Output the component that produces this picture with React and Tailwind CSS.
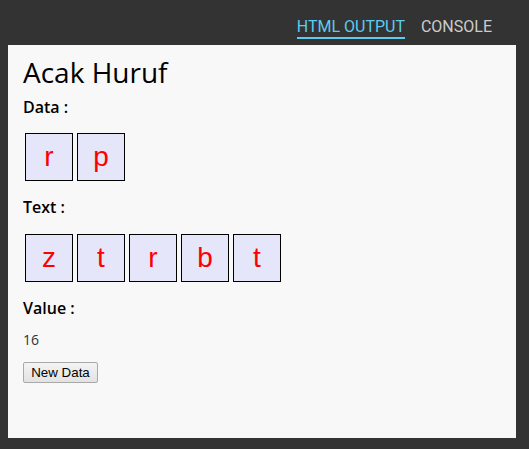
export default function App() {
  const data = ["r", "p"];
  const text = ["z", "t", "r", "b", "t"];
  const Box = ({ c }) => (
    <div className="w-[48px] h-[48px] border border-black bg-[#e6e6fa] text-[#ff0000] text-center text-[28px] leading-[46px] [font-family:'Liberation_Sans',Arial,sans-serif]">
      {c}
    </div>
  );
  return (
    <div className="w-[529px] h-[449px] bg-[#333333] flex flex-col overflow-hidden">
      <div className="h-[45px] flex justify-end items-start pr-[37px] pt-[17px] gap-[16px] [font-family:Roboto,sans-serif] text-[16px] leading-[19px]">
        <div className="text-[#5ccbef] border-b-2 border-[#5ccbef] pb-[1px]">HTML OUTPUT</div>
        <div className="text-[#cccccc]">CONSOLE</div>
      </div>
      <div className="ml-[8px] w-[508px] h-[393px] bg-[#f8f8f8] pl-[15px] pt-[8px] flex flex-col items-start [font-family:'Open_Sans',sans-serif]">
        <div className="text-[28px] leading-[38px] font-medium text-black">Acak Huruf</div>
        <div className="mt-[5px] text-[16px] leading-[22px] font-semibold text-black">Data :</div>
        <div className="mt-[15px] flex gap-[4px] pl-[2px]">
          {data.map((c, i) => (
            <Box key={i} c={c} />
          ))}
        </div>
        <div className="mt-[15px] text-[16px] leading-[22px] font-semibold text-black">Text :</div>
        <div className="mt-[16px] flex gap-[4px] pl-[2px]">
          {text.map((c, i) => (
            <Box key={i} c={c} />
          ))}
        </div>
        <div className="mt-[15px] text-[16px] leading-[22px] font-semibold text-black">Value :</div>
        <div className="mt-[11px] text-[14px] leading-[19px] text-[#333333]">16</div>
        <button className="mt-[13px] w-[75px] h-[21px] border border-[#a9a9a9] rounded-[2px] bg-gradient-to-b from-[#f4f4f4] to-[#e2e2e2] text-black text-[13.33px] leading-[19px] [font-family:'Liberation_Sans',Arial,sans-serif] text-center">
          New Data
        </button>
      </div>
    </div>
  );
}
